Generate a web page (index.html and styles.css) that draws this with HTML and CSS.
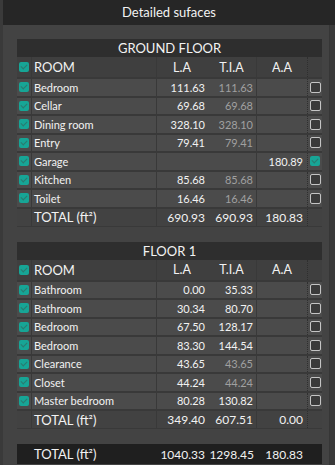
FILE: index.html
```html
<!DOCTYPE html>
<html lang="en">
<head>
    <meta charset="UTF-8">
    <meta name="viewport" content="width=device-width, initial-scale=1.0">
    <title>Detailed sufaces</title>
    <link rel="stylesheet" href="styles.css">
</head>
<body>
    <div class="window">
        <div class="title-bar">Detailed sufaces</div>
        <div class="panel">

            <div class="floor">
                <div class="floor-title">GROUND FLOOR</div>
                <div class="row head">
                    <div class="cell check"><span class="box on"></span></div>
                    <div class="cell room">ROOM</div>
                    <div class="cell num">L.A</div>
                    <div class="cell num tia">T.I.A</div>
                    <div class="cell num aa">A.A</div>
                    <div class="cell check end"></div>
                </div>
                <div class="row">
                    <div class="cell check"><span class="box on"></span></div>
                    <div class="cell room">Bedroom</div>
                    <div class="cell num">111.63</div>
                    <div class="cell num tia dim">111.63</div>
                    <div class="cell num aa"></div>
                    <div class="cell check end"><span class="box off"></span></div>
                </div>
                <div class="row">
                    <div class="cell check"><span class="box on"></span></div>
                    <div class="cell room">Cellar</div>
                    <div class="cell num">69.68</div>
                    <div class="cell num tia dim">69.68</div>
                    <div class="cell num aa"></div>
                    <div class="cell check end"><span class="box off"></span></div>
                </div>
                <div class="row">
                    <div class="cell check"><span class="box on"></span></div>
                    <div class="cell room">Dining room</div>
                    <div class="cell num">328.10</div>
                    <div class="cell num tia dim">328.10</div>
                    <div class="cell num aa"></div>
                    <div class="cell check end"><span class="box off"></span></div>
                </div>
                <div class="row">
                    <div class="cell check"><span class="box on"></span></div>
                    <div class="cell room">Entry</div>
                    <div class="cell num">79.41</div>
                    <div class="cell num tia dim">79.41</div>
                    <div class="cell num aa"></div>
                    <div class="cell check end"><span class="box off"></span></div>
                </div>
                <div class="row">
                    <div class="cell check"><span class="box on"></span></div>
                    <div class="cell room">Garage</div>
                    <div class="cell num"></div>
                    <div class="cell num tia dim"></div>
                    <div class="cell num aa">180.89</div>
                    <div class="cell check end"><span class="box on"></span></div>
                </div>
                <div class="row">
                    <div class="cell check"><span class="box on"></span></div>
                    <div class="cell room">Kitchen</div>
                    <div class="cell num">85.68</div>
                    <div class="cell num tia dim">85.68</div>
                    <div class="cell num aa"></div>
                    <div class="cell check end"><span class="box off"></span></div>
                </div>
                <div class="row">
                    <div class="cell check"><span class="box on"></span></div>
                    <div class="cell room">Toilet</div>
                    <div class="cell num">16.46</div>
                    <div class="cell num tia dim">16.46</div>
                    <div class="cell num aa"></div>
                    <div class="cell check end"><span class="box off"></span></div>
                </div>
                <div class="row total">
                    <div class="cell check"></div>
                    <div class="cell room">TOTAL (ft²)</div>
                    <div class="cell num">690.93</div>
                    <div class="cell num tia">690.93</div>
                    <div class="cell num aa">180.83</div>
                    <div class="cell check end"></div>
                </div>
            </div>

            <div class="floor">
                <div class="floor-title">FLOOR 1</div>
                <div class="row head">
                    <div class="cell check"><span class="box on"></span></div>
                    <div class="cell room">ROOM</div>
                    <div class="cell num">L.A</div>
                    <div class="cell num tia">T.I.A</div>
                    <div class="cell num aa">A.A</div>
                    <div class="cell check end"></div>
                </div>
                <div class="row">
                    <div class="cell check"><span class="box on"></span></div>
                    <div class="cell room">Bathroom</div>
                    <div class="cell num">0.00</div>
                    <div class="cell num tia">35.33</div>
                    <div class="cell num aa"></div>
                    <div class="cell check end"><span class="box off"></span></div>
                </div>
                <div class="row">
                    <div class="cell check"><span class="box on"></span></div>
                    <div class="cell room">Bathroom</div>
                    <div class="cell num">30.34</div>
                    <div class="cell num tia">80.70</div>
                    <div class="cell num aa"></div>
                    <div class="cell check end"><span class="box off"></span></div>
                </div>
                <div class="row">
                    <div class="cell check"><span class="box on"></span></div>
                    <div class="cell room">Bedroom</div>
                    <div class="cell num">67.50</div>
                    <div class="cell num tia">128.17</div>
                    <div class="cell num aa"></div>
                    <div class="cell check end"><span class="box off"></span></div>
                </div>
                <div class="row">
                    <div class="cell check"><span class="box on"></span></div>
                    <div class="cell room">Bedroom</div>
                    <div class="cell num">83.30</div>
                    <div class="cell num tia">144.54</div>
                    <div class="cell num aa"></div>
                    <div class="cell check end"><span class="box off"></span></div>
                </div>
                <div class="row">
                    <div class="cell check"><span class="box on"></span></div>
                    <div class="cell room">Clearance</div>
                    <div class="cell num">43.65</div>
                    <div class="cell num tia dim">43.65</div>
                    <div class="cell num aa"></div>
                    <div class="cell check end"><span class="box off"></span></div>
                </div>
                <div class="row">
                    <div class="cell check"><span class="box on"></span></div>
                    <div class="cell room">Closet</div>
                    <div class="cell num">44.24</div>
                    <div class="cell num tia dim">44.24</div>
                    <div class="cell num aa"></div>
                    <div class="cell check end"><span class="box off"></span></div>
                </div>
                <div class="row">
                    <div class="cell check"><span class="box on"></span></div>
                    <div class="cell room">Master bedroom</div>
                    <div class="cell num">80.28</div>
                    <div class="cell num tia">130.82</div>
                    <div class="cell num aa"></div>
                    <div class="cell check end"><span class="box off"></span></div>
                </div>
                <div class="row total">
                    <div class="cell check"></div>
                    <div class="cell room">TOTAL (ft²)</div>
                    <div class="cell num">349.40</div>
                    <div class="cell num tia">607.51</div>
                    <div class="cell num aa">0.00</div>
                    <div class="cell check end"></div>
                </div>
            </div>

            <div class="row grand-total">
                <div class="cell check"></div>
                <div class="cell room">TOTAL (ft²)</div>
                <div class="cell num">1040.33</div>
                <div class="cell num tia">1298.45</div>
                <div class="cell num aa">180.83</div>
                <div class="cell check"></div>
            </div>

        </div>
    </div>
</body>
</html>
```

FILE: styles.css
```css
:root {
    --title-bg: #262626;
    --panel-bg: #434343;
    --header-bg: #2e2e2e;
    --row-bg: #4b4b4b;
    --line: #393939;
    --teal: #17a596;
    --text: #f2f2f2;
    --dim: #a0a0a0;
}

* {
    box-sizing: border-box;
}

body {
    margin: 0;
    height: 465px;
    overflow: hidden;
    background-color: #3a3a3a;
    font-family: Lato, 'Open Sans', sans-serif;
    color: var(--text);
}

.window {
    margin-left: 3px;
    height: 100%;
    display: flex;
    flex-direction: column;
}

.title-bar {
    height: 25px;
    flex-shrink: 0;
    background-color: var(--title-bg);
    font-size: 13px;
    line-height: 25px;
    text-align: center;
}

.panel {
    flex: 1;
    width: 327px;
    padding: 14px 8px 0 14px;
    background-color: var(--panel-bg);
    border-right: 1px solid #363636;
    display: flex;
    flex-direction: column;
    gap: 15px;
}

.floor {
    width: 305px;
}

.floor-title {
    height: 18px;
    background-color: var(--header-bg);
    font-size: 13px;
    line-height: 18px;
    text-align: center;
}

.row {
    display: grid;
    grid-template-columns: 15px 125px 50px 50px 50px 15px;
    height: 18.5px;
    background-color: var(--row-bg);
    border-top: 2px solid var(--line);
    font-size: 11px;
}

.cell {
    display: flex;
    align-items: center;
    white-space: nowrap;
}

.check {
    justify-content: center;
    border-right: 1px solid var(--line);
}

.check.end {
    border-right: none;
    border-left: 1px dotted #2f2f2f;
}

.room {
    padding-left: 2px;
    border-right: 1px solid var(--line);
}

.num {
    justify-content: flex-end;
    padding-right: 2px;
}

.tia {
    padding-right: 3px;
    border-right: 1px solid var(--line);
}

.aa {
    padding-right: 4px;
}

.dim {
    color: var(--dim);
}

.head {
    height: 20px;
    border-top: none;
    background-color: #3f3f3f;
    font-size: 12.5px;
}

.head .room {
    font-size: 13px;
}

.head .num {
    justify-content: center;
    padding-right: 0;
}

.total {
    height: 20px;
    background-color: #424242;
    border-bottom: 1px solid var(--line);
    font-size: 12px;
}

.total .room,
.grand-total .room {
    font-size: 13px;
}

.grand-total {
    width: 305px;
    height: 20px;
    border-top: none;
    background-color: #1f1f1f;
    font-size: 12px;
}

.grand-total .cell {
    border: none;
}

.box {
    display: block;
    width: 11px;
    height: 11px;
    border-radius: 2px;
}

.box.on {
    width: 10px;
    height: 10px;
    background-color: var(--teal);
    position: relative;
}

.box.on::after {
    content: '';
    position: absolute;
    left: 3px;
    top: 1px;
    width: 3px;
    height: 5px;
    border-right: 1px solid #2b7a70;
    border-bottom: 1px solid #2b7a70;
    transform: rotate(45deg);
}

.box.off {
    border: 1.5px solid #c4c4c4;
    background-color: #3a3a3a;
}
```
